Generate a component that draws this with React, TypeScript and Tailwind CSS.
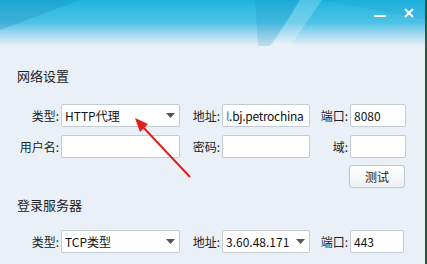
import React from 'react';

const font = { fontFamily: '"Noto Sans CJK SC", "Noto Sans", sans-serif' };

const Caret = () => (
  <svg width="9" height="5" viewBox="0 0 9 5" className="shrink-0">
    <polygon points="0,0 9,0 4.5,5" fill="#555" />
  </svg>
);

const Label: React.FC<{ text: string; w: string }> = ({ text, w }) => (
  <div className={`${w} shrink-0 text-right pr-[2px] text-[12px] text-[#222] leading-[23px] whitespace-nowrap`}>{text}</div>
);

const Box: React.FC<{ w: string; children?: React.ReactNode; combo?: boolean }> = ({ w, children, combo }) => (
  <div className={`${w} h-[23px] shrink-0 bg-white border border-[#c3cbd5] rounded-[2px] flex items-center pl-[3px] pr-[4px] text-[12px] text-[#111] overflow-hidden`}>
    <div className="flex-1 whitespace-nowrap overflow-hidden leading-[21px]">{children}</div>
    {combo && <Caret />}
  </div>
);

export default function App() {
  return (
    <div className="w-[427px] h-[264px] relative overflow-hidden bg-[#eaf0f8] border-r-2 border-[#245c34]" style={font}>
      {/* banner */}
      <div className="relative h-[46px] bg-gradient-to-b from-[#1bb4e0] via-[#4cc3e6] to-[#eaf0f8]">
        <svg className="absolute inset-0" width="425" height="46" viewBox="0 0 425 46">
          <polygon points="0,0 80,0 0,30" fill="#0f7fb0" opacity="0.25" />
          <polygon points="255,0 300,0 270,46 258,46" fill="#0e86b8" opacity="0.18" />
          <polygon points="300,0 322,0 290,46 272,46" fill="#ffffff" opacity="0.22" />
          <polygon points="322,0 425,0 425,20" fill="#0f8ac0" opacity="0.12" />
        </svg>
        <div className="relative flex justify-end items-start gap-[18px] pr-[11px] pt-[8px]">
          <div className="w-[12px] h-[2px] bg-white mt-[7px]" />
          <svg width="10" height="10" viewBox="0 0 10 10">
            <path d="M1 1 L9 9 M9 1 L1 9" stroke="white" strokeWidth="2" />
          </svg>
        </div>
      </div>

      <div className="pl-[15px]">
        <div className="mt-[21px] pl-[2px] h-[18px] leading-[18px] text-[13px] text-[#222]">网络设置</div>

        <div className="mt-[19px] flex">
          <Label text="类型:" w="w-[46px]" />
          <Box w="w-[119px]" combo>HTTP代理</Box>
          <Label text="地址:" w="w-[42px]" />
          <Box w="w-[88px]">
            <span className="tracking-[-0.3px]"><span className="text-[#3a78c0]">l</span>.bj.petrochina</span>
          </Box>
          <Label text="端口:" w="w-[40px]" />
          <Box w="w-[56px]">8080</Box>
        </div>

        <div className="mt-[8px] flex">
          <Label text="用户名:" w="w-[46px]" />
          <Box w="w-[119px]" />
          <Label text="密码:" w="w-[42px]" />
          <Box w="w-[88px]" />
          <Label text="域:" w="w-[40px]" />
          <Box w="w-[56px]" />
        </div>

        <div className="mt-[7px] flex justify-end pr-[20px]">
          <button className="w-[56px] h-[23px] rounded-[3px] border border-[#bcc4ce] bg-gradient-to-b from-white to-[#edf0f4] text-[12px] text-[#222] leading-[21px]">
            测试
          </button>
        </div>

        <div className="mt-[8px] pl-[2px] h-[18px] leading-[18px] text-[13px] text-[#222]">登录服务器</div>

        <div className="mt-[16px] flex">
          <Label text="类型:" w="w-[46px]" />
          <Box w="w-[119px]" combo>TCP类型</Box>
          <Label text="地址:" w="w-[42px]" />
          <Box w="w-[88px]" combo>3.60.48.171</Box>
          <Label text="端口:" w="w-[40px]" />
          <Box w="w-[54px]">443</Box>
        </div>
      </div>

      {/* red annotation arrow */}
      <svg className="absolute left-0 top-0 pointer-events-none" width="427" height="264" viewBox="0 0 427 264">
        <line x1="190" y1="177" x2="142" y2="126" stroke="#e0201c" strokeWidth="2" />
        <polygon points="135,118 148,124 140,132" fill="#e0201c" />
      </svg>
    </div>
  );
}
